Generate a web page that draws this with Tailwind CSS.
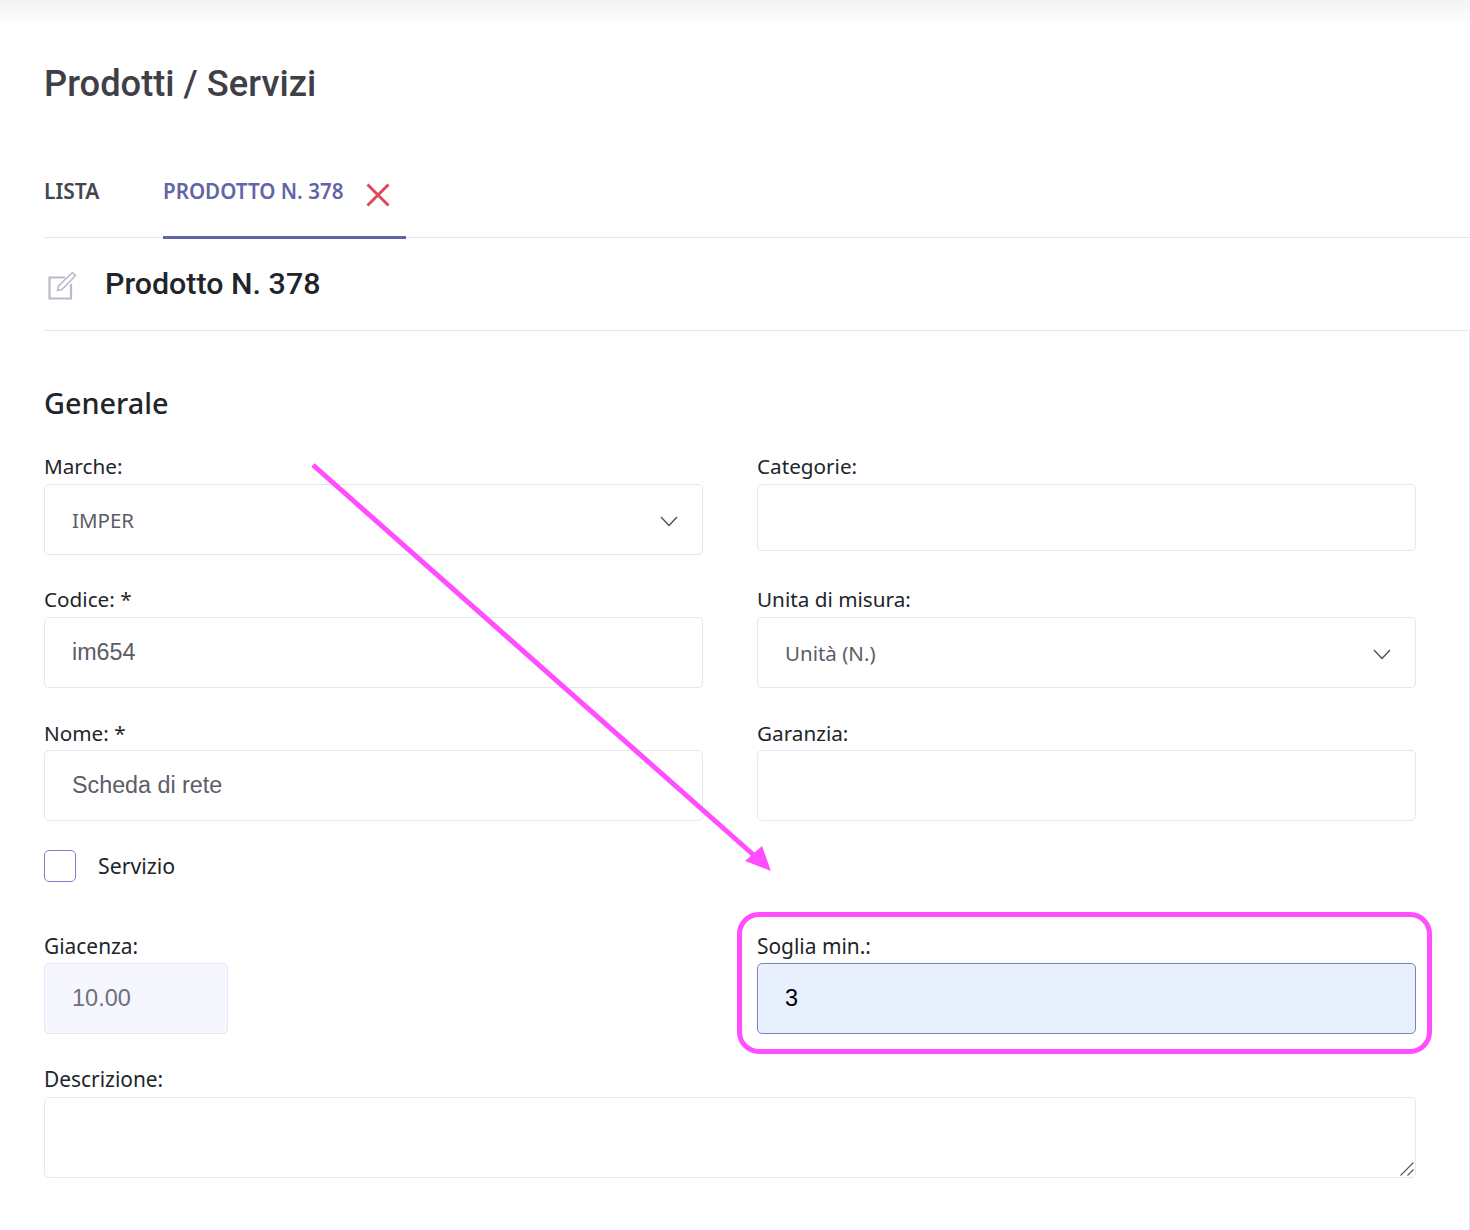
<!DOCTYPE html>
<html lang="it">
<head>
<meta charset="utf-8">
<script src="https://cdn.jsdelivr.net/npm/@tailwindcss/browser@4"></script>
<title>Prodotti / Servizi</title>
</head>
<body class="bg-white font-['Noto_Sans',sans-serif] text-[#212529]">
<div class="relative w-[1470px] h-[1230px] overflow-hidden">
  <div class="h-[25px] bg-gradient-to-b from-[#f3f3f4] to-white"></div>

  <div class="pl-[44px]">
    <h1 class="mt-[35px] h-[48px] font-['Roboto',sans-serif] font-medium text-[36.300px] leading-[48px] text-[#3f4047]">Prodotti / Servizi</h1>

    <nav class="mt-[72px] h-[58px] flex border-b border-[#e6e6f0] items-stretch">
      <div class="w-[119px] mt-[-3px] font-semibold text-[21px] leading-[28px] text-[#45464d]">LISTA</div>
      <div class="relative w-[243px] h-[59px] border-b-[3px] border-[#6264a7] flex font-semibold text-[20.600px] leading-[28px] text-[#6264a7]">
        <span class="mt-[-3px]">PRODOTTO N. 378</span>
        <svg class="absolute left-[203px] top-[3px]" width="24" height="24" viewBox="0 0 24 24" fill="none" stroke="#dc4a5a" stroke-width="3"><path d="M1.500 1.500 22.500 22.500M22.500 1.500 1.500 22.500"/></svg>
      </div>
    </nav>

    <div class="h-[93px] flex items-center border-b border-[#e6e6f0]">
      <svg class="ml-[4px] mt-[3px]" width="29" height="29" viewBox="0 0 29 29" fill="none" stroke="#b9bad0" stroke-width="2.200"><path d="M17 6.500H1.500V27.500H23V13"/><path d="M10.500 15 9.500 19.500 14 18.500 27.500 4.500 24.500 1.500Z" stroke-width="1.600"/></svg>
      <h2 class="ml-[28px] font-['Roboto',sans-serif] font-medium text-[30.400px] leading-[40px] mb-[1px] text-[#212529]">Prodotto N. 378</h2>
    </div>

    <div class="border-r border-[#e6e6f0] h-[899px] pt-[49px]">
      <h3 class="h-[46px] font-medium text-[28.800px] leading-[46px] text-[#212529]">Generale</h3>

      <div class="mt-[28px] w-[1372px] grid grid-cols-2 gap-x-[54px] gap-y-[32px] items-start text-[20.700px] leading-[26px]">
        <div>
          <label class="block mt-[-1px] mb-[5px]">Marche:</label>
          <div class="relative h-[71px]">
            <select class="w-full h-full appearance-none rounded-[5px] border border-[#e6e6f0] bg-white pl-[27px] text-[20.500px] text-[#5c5d66]"><option>IMPER</option></select>
            <svg class="absolute right-[25px] top-[32px]" width="18" height="11" viewBox="0 0 18 11" fill="none" stroke="#4b4c55" stroke-width="1.300"><path d="M1 1 9 9.500 17 1"/></svg>
          </div>
        </div>
        <div>
          <label class="block mt-[-1px] mb-[5px]">Categorie:</label>
          <div class="h-[67px] rounded-[5px] border border-[#e6e6f0] bg-white"></div>
        </div>
        <div>
          <label class="block mt-[-1px] mb-[5px]">Codice: *</label>
          <input class="block w-full h-[71px] rounded-[5px] border border-[#e6e6f0] bg-white pl-[27px] font-['Liberation_Sans',sans-serif] text-[23.300px] text-[#5c5d66]" value="im654">
        </div>
        <div>
          <label class="block mt-[-1px] mb-[5px]">Unita di misura:</label>
          <div class="relative h-[71px]">
            <select class="w-full h-full appearance-none rounded-[5px] border border-[#e6e6f0] bg-white pl-[27px] text-[20.500px] text-[#5c5d66]"><option>Unità (N.)</option></select>
            <svg class="absolute right-[25px] top-[32px]" width="18" height="11" viewBox="0 0 18 11" fill="none" stroke="#4b4c55" stroke-width="1.300"><path d="M1 1 9 9.500 17 1"/></svg>
          </div>
        </div>
        <div>
          <label class="block mb-[4px]">Nome: *</label>
          <input class="block w-full h-[71px] rounded-[5px] border border-[#e6e6f0] bg-white pl-[27px] font-['Liberation_Sans',sans-serif] text-[23.300px] text-[#5c5d66]" value="Scheda di rete">
        </div>
        <div>
          <label class="block mb-[4px]">Garanzia:</label>
          <div class="h-[71px] rounded-[5px] border border-[#e6e6f0] bg-white"></div>
        </div>
      </div>

      <div class="mt-[29px] h-[32px] flex items-center gap-[22px]">
        <span class="w-[32px] h-[32px] rounded-[5px] border border-[#7b7fd1] bg-white"></span>
        <span class="text-[21.300px] leading-[26px] text-[#212529]">Servizio</span>
      </div>

      <div class="mt-[51px] w-[1372px] grid grid-cols-2 gap-x-[54px] items-start text-[20.900px] leading-[26px]">
        <div>
          <label class="block mb-[4px]">Giacenza:</label>
          <input class="block w-[184px] h-[71px] rounded-[5px] border border-[#e6e6f7] bg-[#f5f6fe] pl-[27px] font-['Liberation_Sans',sans-serif] text-[23.500px] text-[#6f7079]" value="10.00" readonly>
        </div>
        <div class="relative">
          <label class="block mb-[4px]">Soglia min.:</label>
          <input class="block w-full h-[71px] rounded-[5px] border border-[#7b80c4] bg-[#e8f0fd] pl-[27px] font-['Liberation_Sans',sans-serif] text-[23.500px] text-black" value="3">
          <div class="absolute left-[-20px] top-[-21px] w-[695px] h-[142px] rounded-[22px] border-[5px] border-[#ff4dff]"></div>
        </div>
      </div>

      <div class="mt-[32px] w-[1372px] relative">
        <label class="block mb-[5px] text-[20.900px] leading-[26px]">Descrizione:</label>
        <textarea class="block w-full h-[81px] rounded-[5px] border border-[#e6e6f0] bg-white resize-none"></textarea>
        <svg class="absolute right-[2px] bottom-[2px]" width="14" height="14" viewBox="0 0 14 14" fill="none" stroke="#55565c" stroke-width="1.100"><path d="M0.500 13.500 13.500 0.500M7.500 13.500 13.500 7.500"/></svg>
      </div>
    </div>
  </div>

  <svg class="absolute left-0 top-0 pointer-events-none" width="1470" height="1230" viewBox="0 0 1470 1230" fill="none">
    <path d="M313 465 757 858" stroke="#ff4dff" stroke-width="5"/>
    <path d="M771 871 745 861 762 846Z" fill="#ff4dff"/>
  </svg>
</div>
</body>
</html>
